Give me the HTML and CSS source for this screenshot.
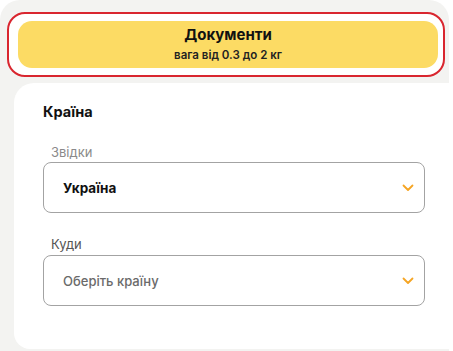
FILE: index.html
```html
<!DOCTYPE html>
<html lang="uk">
<head>
<meta charset="utf-8">
<link rel="stylesheet" href="styles.css">
</head>
<body>
<div class="page">
  <div class="highlight">
    <button class="tariff">
      <span class="tariff-title">Документи</span>
      <span class="tariff-sub">вага від 0.3 до 2 кг</span>
    </button>
  </div>
  <div class="card">
    <div class="card-title">Країна</div>
    <div class="field">
      <div class="label">Звідки</div>
      <div class="select">
        <span class="value">Україна</span>
        <svg class="chev" width="12" height="8" viewBox="0 0 12 8"><polyline points="1.5,1.5 6,6 10.5,1.5" fill="none" stroke="#f5a524" stroke-width="1.8" stroke-linecap="round" stroke-linejoin="round"/></svg>
      </div>
    </div>
    <div class="field">
      <div class="label">Куди</div>
      <div class="select">
        <span class="value placeholder">Оберіть країну</span>
        <svg class="chev" width="12" height="8" viewBox="0 0 12 8"><polyline points="1.5,1.5 6,6 10.5,1.5" fill="none" stroke="#f5a524" stroke-width="1.8" stroke-linecap="round" stroke-linejoin="round"/></svg>
      </div>
    </div>
  </div>
</div>
</body>
</html>
```

FILE: styles.css
```css
html, body {
  margin: 0;
  padding: 0;
  background: #ffffff;
  font-family: "Inter", "Roboto", "Liberation Sans", sans-serif;
}

.page {
  width: 449px;
  height: 351px;
  box-sizing: border-box;
  background: #f3f3f1;
  border-radius: 20px 20px 0 0;
  padding: 12px 0 0 7px;
}

.highlight {
  width: 438px;
  box-sizing: border-box;
  border: 2px solid #d9262f;
  border-radius: 18px;
  background: #ffffff;
  padding: 7px 5px 7px 9px;
}

.tariff {
  display: flex;
  flex-direction: column;
  align-items: center;
  justify-content: center;
  width: 100%;
  height: 47px;
  border: none;
  border-radius: 14px;
  background: #fcdb64;
  padding: 0 0 2px;
  font-family: inherit;
  color: #111;
}

.tariff-title {
  font-size: 15px;
  font-weight: 700;
  line-height: 20px;
}

.tariff-sub {
  font-size: 11.5px;
  font-weight: 600;
  line-height: 14px;
  margin-top: 3px;
  color: #222;
}

.card {
  margin: 6px -4px 0 7px;
  height: 266px;
  box-sizing: border-box;
  background: #ffffff;
  border-radius: 20px 0 0 16px;
  padding: 20px 28px 0 29px;
}

.card-title {
  font-size: 14.5px;
  font-weight: 700;
  line-height: 18px;
  color: #111;
}

.field {
  margin-top: 23px;
}

.label {
  font-size: 13px;
  line-height: 16px;
  color: #8a8a8a;
  padding-left: 8px;
  margin-bottom: 2px;
}

.field + .field .label {
  color: #555;
  margin-bottom: 3px;
}

.select {
  display: flex;
  align-items: center;
  justify-content: space-between;
  height: 51px;
  box-sizing: border-box;
  border: 1.5px solid #a3a3a3;
  border-radius: 8px;
  padding: 0 10px 0 19px;
}

.value {
  font-size: 13.5px;
  font-weight: 700;
  color: #111;
}

.value.placeholder {
  font-size: 13px;
  font-weight: 500;
  color: #6a6a6a;
}

.chev {
  display: block;
  margin-top: 1px;
}
```
